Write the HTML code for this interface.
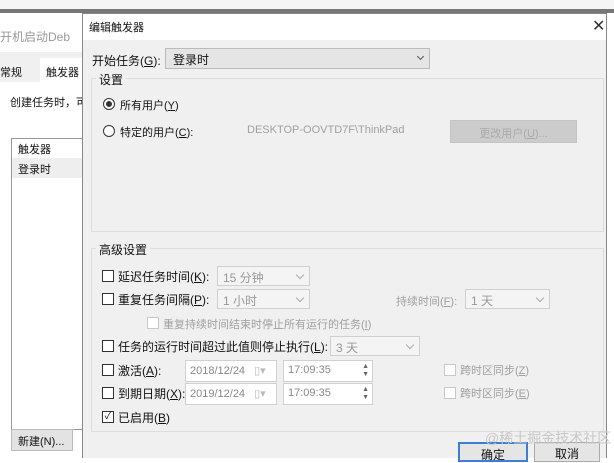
<!DOCTYPE html>
<html><head><meta charset="utf-8"><style>
*{box-sizing:border-box;margin:0;padding:0}
body{width:614px;height:458px;overflow:hidden;background:#fff;position:relative;font-family:"Liberation Sans","Noto Sans CJK SC",sans-serif;font-size:12px;color:#111}
.a{position:absolute;white-space:nowrap}
.g{color:#a0a0a0}
.cb{position:absolute;width:12px;height:12px;border:1px solid #333;background:#fff}
.cb.d{border-color:#c8c8c8}
.sel{position:absolute;height:20px;border:1px solid #d0d0d0;background:#f4f4f4;color:#999;padding:2px 5px;font-size:12px}
.sel:after{content:"";position:absolute;right:6px;top:5px;width:5px;height:5px;border-right:1px solid #aaa;border-bottom:1px solid #aaa;transform:rotate(45deg)}
.box{position:absolute;height:22px;border:1px solid #d0d0d0;background:#fff;color:#888;padding:3px 4px;font-size:11px}
</style></head><body>
<!-- background window -->
<div class="a" style="left:0;top:0;width:614px;height:10px;background:#f5f5f5"></div>
<div class="a" style="left:0;top:9px;width:614px;height:4px;background:#777"></div>
<div class="a" style="left:0;top:28px;color:#999;font-size:12px">开机启动Deb</div>
<div class="a" style="left:0;top:52px;width:82px;height:30px;background:#f0f0f0"></div>
<div class="a" style="left:40px;top:58px;width:42px;height:24px;background:#fff"></div>
<div class="a" style="left:0;top:64px;font-size:11px">常规</div>
<div class="a" style="left:46px;top:64px;font-size:11px">触发器</div>
<div class="a" style="left:10px;top:94px;font-size:11px">创建任务时，可</div>
<div class="a" style="left:11px;top:138px;width:71px;height:292px;border:1px solid #999;border-right:none;background:#fff"></div>
<div class="a" style="left:18px;top:141px;font-size:11px">触发器</div>
<div class="a" style="left:12px;top:158px;width:70px;height:20px;background:#eee"></div>
<div class="a" style="left:18px;top:161px;font-size:11px">登录时</div>
<div class="a" style="left:11px;top:429px;width:62px;height:22px;border:1px solid #bbb;background:#e3e3e3;padding:3px 6px;font-size:11px">新建(N)...</div>
<!-- dialog -->
<div class="a" style="left:82px;top:13px;width:525px;height:445px;background:#f0f0f0;border:1px solid #888;border-bottom:none"></div>
<div class="a" style="left:83px;top:14px;width:523px;height:26px;background:#fff"></div>
<div class="a" style="left:89px;top:19px;font-size:11px">编辑触发器</div>
<div class="a" style="left:592px;top:16px;font-size:16px;color:#333">✕</div>
<div class="a" style="left:92px;top:52px">开始任务(<u>G</u>):</div>
<div class="a" style="left:165px;top:48px;width:265px;height:21px;border:1px solid #bbb;background:#e5e5e5;padding:2px 7px">登录时</div>
<div class="a" style="left:418px;top:54px;width:5px;height:5px;border-right:1px solid #555;border-bottom:1px solid #555;transform:rotate(45deg)"></div>
<!-- settings group -->
<div class="a" style="left:91px;top:78px;width:513px;height:154px;border:1px solid #ddd"></div>
<div class="a" style="left:96px;top:71px;background:#f0f0f0;padding:0 3px">设置</div>
<div class="a" style="left:103px;top:98px;width:12px;height:12px;border:1px solid #333;border-radius:50%;background:#fff"><div style="margin:2px;width:6px;height:6px;border-radius:50%;background:#333"></div></div>
<div class="a" style="left:120px;top:97px;font-size:11px">所有用户(<u>Y</u>)</div>
<div class="a" style="left:103px;top:125px;width:12px;height:12px;border:1px solid #333;border-radius:50%;background:#fff"></div>
<div class="a" style="left:120px;top:124px;font-size:11px">特定的用户(<u>C</u>):</div>
<div class="a g" style="left:247px;top:124px;font-size:11px">DESKTOP-OOVTD7F\ThinkPad</div>
<div class="a" style="left:450px;top:120px;width:127px;height:23px;background:#ccc;border:1px solid #c4c4c4;color:#aaa;font-size:11px;text-align:center;padding-top:4px">更改用户(<u>U</u>)...</div>
<!-- advanced group -->
<div class="a" style="left:91px;top:248px;width:513px;height:184px;border:1px solid #ddd"></div>
<div class="a" style="left:96px;top:241px;background:#f0f0f0;padding:0 3px">高级设置</div>
<div class="cb" style="left:102px;top:270px"></div>
<div class="a" style="left:118px;top:268px">延迟任务时间(<u>K</u>):</div>
<div class="sel" style="left:217px;top:266px;width:93px">15 分钟</div>
<div class="cb" style="left:102px;top:293px"></div>
<div class="a" style="left:118px;top:291px">重复任务间隔(<u>P</u>):</div>
<div class="sel" style="left:217px;top:289px;width:93px">1 小时</div>
<div class="a g" style="left:396px;top:293px;font-size:11px">持续时间(<u>F</u>):</div>
<div class="sel" style="left:465px;top:289px;width:85px">1 天</div>
<div class="cb d" style="left:147px;top:317px"></div>
<div class="a g" style="left:163px;top:316px;font-size:11px">重复持续时间结束时停止所有运行的任务(<u>I</u>)</div>
<div class="cb" style="left:102px;top:340px"></div>
<div class="a" style="left:118px;top:338px">任务的运行时间超过此值则停止执行(<u>L</u>):</div>
<div class="sel" style="left:330px;top:336px;width:90px">3 天</div>
<div class="cb" style="left:102px;top:364px"></div>
<div class="a" style="left:118px;top:362px">激活(<u>A</u>):</div>
<div class="box" style="left:185px;top:360px;width:92px">2018/12/24 <span style="margin-left:6px;color:#bbb">▯▾</span></div>
<div class="box" style="left:283px;top:360px;width:90px">17:09:35<span style="position:absolute;right:3px;top:2px;font-size:7px;line-height:8px;color:#666">▲<br>▼</span></div>
<div class="cb d" style="left:444px;top:364px"></div>
<div class="a g" style="left:460px;top:362px;font-size:11px">跨时区同步(<u>Z</u>)</div>
<div class="cb" style="left:102px;top:387px"></div>
<div class="a" style="left:118px;top:385px">到期日期(<u>X</u>):</div>
<div class="box" style="left:185px;top:383px;width:92px">2019/12/24 <span style="margin-left:6px;color:#bbb">▯▾</span></div>
<div class="box" style="left:283px;top:383px;width:90px">17:09:35<span style="position:absolute;right:3px;top:2px;font-size:7px;line-height:8px;color:#666">▲<br>▼</span></div>
<div class="cb d" style="left:444px;top:387px"></div>
<div class="a g" style="left:460px;top:385px;font-size:11px">跨时区同步(<u>E</u>)</div>
<div class="cb" style="left:102px;top:411px;font-size:10px;line-height:10px;text-align:center">✓</div>
<div class="a" style="left:118px;top:409px">已启用(<u>B</u>)</div>
<!-- buttons -->
<div class="a" style="left:458px;top:442px;width:70px;height:20px;border:2px solid #3c7fd1;background:#e5e5e5;text-align:center;padding-top:2px">确定</div>
<div class="a" style="left:534px;top:442px;width:66px;height:20px;border:1px solid #aaa;background:#e5e5e5;text-align:center;padding-top:2px">取消</div>
<div class="a" style="left:485px;top:428px;color:#c8c8c8;font-size:14px">@稀土掘金技术社区</div>
</body></html>
